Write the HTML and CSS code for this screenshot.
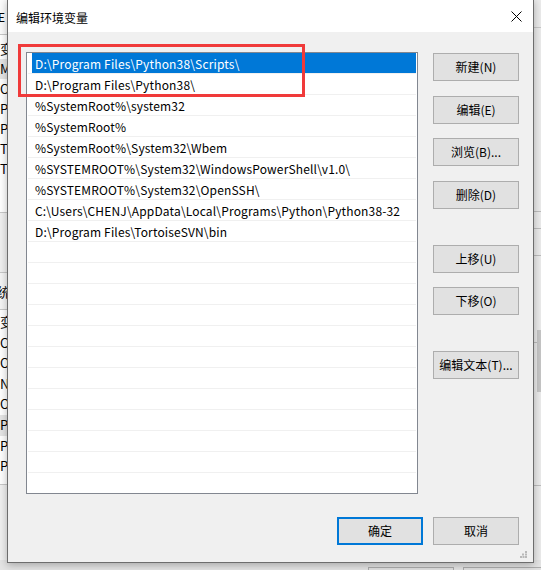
FILE: index.html
```html
<!DOCTYPE html>
<html>
<head>
<meta charset="utf-8">
<link rel="stylesheet" href="styles.css">
</head>
<body>
<div class="screen">
  <div class="bg-left">
    <div class="bl-top"><span>E</span></div>
    <div class="bl-list">
      <div class="bl-row">变</div>
      <div class="bl-row sel">M</div>
      <div class="bl-row">O</div>
      <div class="bl-row">Pa</div>
      <div class="bl-row">Py</div>
      <div class="bl-row">TE</div>
      <div class="bl-row">TN</div>
    </div>
    <div class="bl-gap"></div>
    <div class="bl-head">统</div>
    <div class="bl-list2">
      <div class="bl-row">变</div>
      <div class="bl-row">Co</div>
      <div class="bl-row">Or</div>
      <div class="bl-row">NU</div>
      <div class="bl-row">OS</div>
      <div class="bl-row sel">Pa</div>
      <div class="bl-row">PA</div>
      <div class="bl-row">PR</div>
    </div>
  </div>
  <div class="bg-right">
    <div class="br-a"></div>
    <div class="br-b"></div>
    <div class="br-c"></div>
    <div class="br-d"></div>
    <div class="br-e"></div>
    <div class="br-f"></div>
    <div class="br-g"></div>
  </div>
  <div class="bg-bottom">
    <div class="bb-btn"></div>
    <div class="bb-btn"></div>
  </div>

  <div class="dialog">
    <div class="titlebar">
      <span class="title">编辑环境变量</span>
      <svg class="close" width="11" height="11" viewBox="0 0 11 11"><path d="M0.5 0.5 L10.5 10.5 M10.5 0.5 L0.5 10.5" stroke="#000" stroke-width="1" fill="none"/></svg>
    </div>
    <div class="body">
      <div class="main">
        <div class="listbox">
          <div class="row selected"><span>D:\Program Files\Python38\Scripts\</span></div>
          <div class="row"><span>D:\Program Files\Python38\</span></div>
          <div class="row"><span>%SystemRoot%\system32</span></div>
          <div class="row"><span>%SystemRoot%</span></div>
          <div class="row"><span>%SystemRoot%\System32\Wbem</span></div>
          <div class="row"><span>%SYSTEMROOT%\System32\WindowsPowerShell\v1.0\</span></div>
          <div class="row"><span>%SYSTEMROOT%\System32\OpenSSH\</span></div>
          <div class="row"><span>C:\Users\CHENJ\AppData\Local\Programs\Python\Python38-32</span></div>
          <div class="row"><span>D:\Program Files\TortoiseSVN\bin</span></div>
          <div class="row"></div><div class="row"></div><div class="row"></div>
          <div class="row"></div><div class="row"></div><div class="row"></div>
          <div class="row"></div><div class="row"></div><div class="row"></div>
          <div class="row"></div><div class="row"></div><div class="row"></div>
        </div>
        <div class="side">
          <button class="btn">新建(N)</button>
          <button class="btn g15">编辑(E)</button>
          <button class="btn g14">浏览(B)...</button>
          <button class="btn g15">删除(D)</button>
          <button class="btn g36">上移(U)</button>
          <button class="btn g14">下移(O)</button>
          <button class="btn g36">编辑文本(T)...</button>
        </div>
      </div>
      <div class="footer">
        <button class="btn primary">确定</button>
        <button class="btn">取消</button>
      </div>
    </div>
    <svg class="grip" width="7" height="7" viewBox="0 0 7 7">
      <rect x="5" y="0" width="2" height="2" fill="#b8b8b8"/>
      <rect x="2" y="2.5" width="2" height="2" fill="#b8b8b8"/>
      <rect x="5" y="2.5" width="2" height="2" fill="#b8b8b8"/>
      <rect x="0" y="5" width="2" height="2" fill="#b8b8b8"/>
      <rect x="2.5" y="5" width="2" height="2" fill="#b8b8b8"/>
      <rect x="5" y="5" width="2" height="2" fill="#b8b8b8"/>
    </svg>
  </div>

  <div class="annot"></div>
</div>
</body>
</html>
```

FILE: styles.css
```css
* { box-sizing: border-box; }
html, body { margin: 0; padding: 0; }
body {
  width: 541px; height: 570px; overflow: hidden;
  font-family: "Noto Sans CJK SC", "Noto Sans", sans-serif;
  font-size: 12px; color: #000;
}
.screen { position: relative; width: 541px; height: 570px; background: #ececec; overflow: hidden; }

/* background windows */
.bg-left {
  position: absolute; left: 0; top: 0; width: 40px; height: 570px;
  background: #f0f0f0; display: flex; flex-direction: column;
}
.bl-top { height: 35px; background: #fbfbfb; border-bottom: 1px solid #c8c8c8; padding: 8px 0 0 0; line-height: 18px; }
.bl-top span { margin-left: -2px; }
.bl-list { background: #fff; padding-top: 4px; height: 178px; border-bottom: 1px solid #c8c8c8; }
.bl-row { height: 20px; line-height: 20px; font-size: 13px; margin-left: -2px; padding-left: 2px; white-space: nowrap; }
.bl-row.sel { background: #e5e5e5; }
.bl-gap { height: 60px; background: #f0f0f0; border-bottom: 1px solid #c8c8c8; }
.bl-head { height: 37px; line-height: 37px; background: #f5f5f5; border-bottom: 1px solid #c8c8c8; margin-left: -3px; font-size: 13px; }
.bl-list2 { background: #fff; padding-top: 2px; height: 175px; border-bottom: 1px solid #c8c8c8; }
.bl-list2 .bl-row { height: 20.6px; line-height: 20.6px; }

.bg-right { position: absolute; left: 530px; top: 0; width: 11px; height: 570px; background: #ebebeb; }
.bg-right > div { position: absolute; left: 0; width: 11px; height: 1px; background: #bdbdbd; }
.br-a { top: 27px; background: #c8c8c8 !important; }
.br-b { top: 211px; }
.br-c { top: 228px; }
.br-d { top: 255px; }
.br-e { top: 342px; }
.br-f { top: 485px; }
.br-g { top: 330px !important; left: 7px !important; width: 4px !important; height: 62px !important; background: #c6c6c6 !important; }

.bg-bottom { position: absolute; left: 0; top: 560px; width: 541px; height: 10px; background: #e4e4e4; }
.bb-btn { position: absolute; top: 7px; width: 86px; height: 10px; background: #e1e1e1; border: 1px solid #adadad; }
.bb-btn:first-child { left: 368px; }
.bb-btn:last-child { left: 463px; }

/* dialog */
.dialog {
  position: absolute; left: 7px; top: -1px; width: 527px; height: 564px;
  background: #f0f0f0; border: 1px solid #6d6d6d;
  box-shadow: 0 2px 8px rgba(0,0,0,0.28);
  display: flex; flex-direction: column;
}
.titlebar {
  height: 32px; background: #fff; flex: none;
  display: flex; align-items: center; justify-content: space-between;
  padding: 0 11px 0 8px;
}
.title { font-size: 12px; line-height: 16px; margin-top: 3px; }
.close { margin-top: 1px; }
.body { flex: 1; display: flex; flex-direction: column; padding: 20px 14px 0 18px; }
.main { display: flex; gap: 15px; }
.listbox {
  width: 392px; height: 442px; background: #fff; border: 1px solid #828790;
  overflow: hidden; display: flex; flex-direction: column;
}
.row {
  height: 21px; flex: none; border-bottom: 1px solid #f0f0f0;
  padding-left: 4px; margin-left: 1px; margin-right: 1px;
  display: flex;
}
.row span {
  padding-left: 3px; padding-top: 2px; line-height: 18px; white-space: nowrap;
  font-size: 12px; letter-spacing: 0.16px;
}
.row.selected span { background: #0078d7; color: #fff; flex: 1; }
.side { display: flex; flex-direction: column; padding-top: 1px; }
.btn {
  width: 86px; height: 28px; padding: 0; margin: 0; flex: none;
  background: #e1e1e1; border: 1px solid #adadad; border-radius: 0;
  font-family: "Noto Sans CJK SC", "Noto Sans", sans-serif; font-size: 12px; color: #000;
  line-height: 26px;
}
.side .g14 { margin-top: 14px; }
.side .g15 { margin-top: 15px; }
.side .g36 { margin-top: 36px; }
.footer { display: flex; justify-content: flex-end; gap: 10px; margin-top: 23px; }
.btn.primary { border: 2px solid #0078d7; line-height: 24px; }
.grip { position: absolute; right: 6px; bottom: 4px; }

.annot {
  position: absolute; left: 18px; top: 44px; width: 287px; height: 53px;
  border: 3px solid #f03a3a;
}
```
